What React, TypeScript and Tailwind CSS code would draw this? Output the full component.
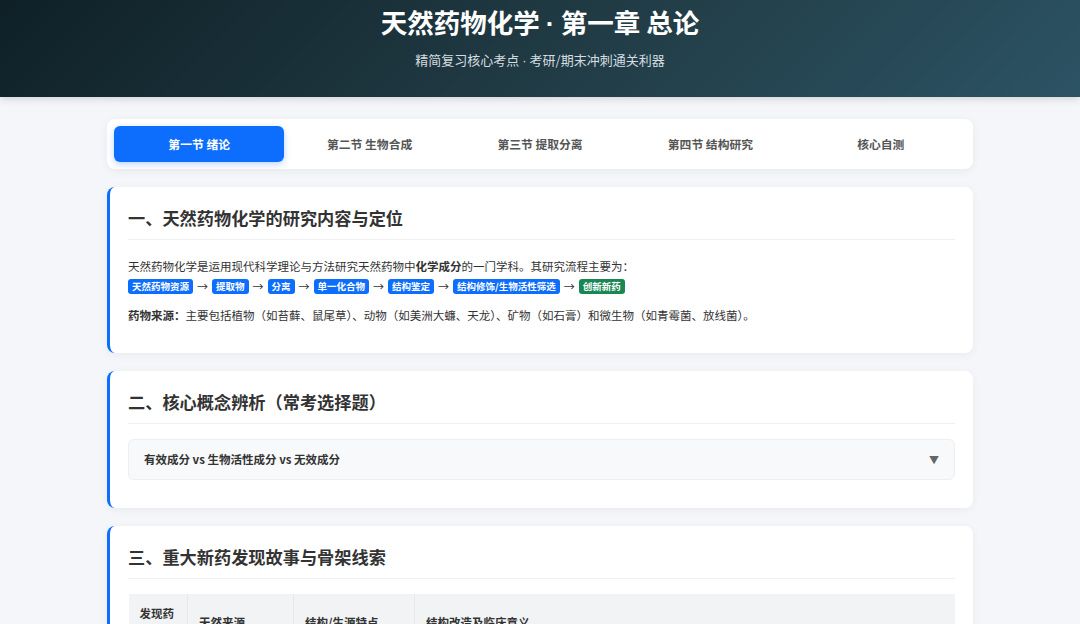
import React, { useState } from "react";

const TABS = ["第一节 绪论", "第二节 生物合成", "第三节 提取分离", "第四节 结构研究", "核心自测"];

const FLOW: { label: string; green?: boolean }[] = [
  { label: "天然药物资源" },
  { label: "提取物" },
  { label: "分离" },
  { label: "单一化合物" },
  { label: "结构鉴定" },
  { label: "结构修饰/生物活性筛选" },
  { label: "创新新药", green: true },
];

// Latin middle dot: the CJK one is full-width and spreads the title out.
const Dot = () => <span className="font-['Liberation_Sans']">·</span>;

function Card({ title, children }: { title: string; children: React.ReactNode }) {
  return (
    <section className="rounded-lg border-l-[3px] border-[#0d6efd] bg-white px-[18px] pt-[20px] pb-[28px] shadow-[0_2px_10px_rgba(0,0,0,0.05)]">
      <h2 className="m-0 border-b border-[#eef0f2] pb-[10px] text-[17.2px] font-bold leading-[22px] text-[#333]">
        {title}
      </h2>
      {children}
    </section>
  );
}

export default function App() {
  const [tab, setTab] = useState(0);
  const [open, setOpen] = useState(false);

  return (
    <div
      className="min-h-screen bg-[#f4f6f9] text-[#333]"
      style={{ fontFamily: '"Noto Sans CJK SC", "Noto Sans", sans-serif' }}
    >
      <header className="flex h-[97px] flex-col items-center bg-[linear-gradient(135deg,#0f2027,#203a43,#2c5364)] pt-[4px] text-white shadow-[0_2px_8px_rgba(0,0,0,0.15)]">
        <h1 className="m-0 text-[26.5px] font-bold leading-[36px]">
          天然药物化学 <Dot /> 第一章 总论
        </h1>
        <p className="m-0 mt-[8px] text-[13px] leading-[20px] text-[#d5dde0]">
          精简复习核心考点 <Dot /> 考研/期末冲刺通关利器
        </p>
      </header>

      <main className="mx-[107px] flex flex-col gap-[18px] pt-[22px]">
        <nav className="flex rounded-lg bg-white p-[7px] shadow-[0_2px_10px_rgba(0,0,0,0.06)]">
          {TABS.map((t, i) => (
            <button
              key={t}
              type="button"
              onClick={() => setTab(i)}
              className={
                i === tab
                  ? "h-9 flex-1 rounded-md bg-[#0d6efd] text-[11.8px] font-bold text-white shadow-[0_2px_6px_rgba(13,110,253,0.3)]"
                  : "h-9 flex-1 rounded-md text-[11.8px] font-bold text-[#555]"
              }
            >
              {t}
            </button>
          ))}
        </nav>

        <Card title="一、天然药物化学的研究内容与定位">
          <p className="m-0 mt-[16px] text-[11.5px] leading-[20px] text-[#333]">
            天然药物化学是运用现代科学理论与方法研究天然药物中<b>化学成分</b>的一门学科。其研究流程主要为：
          </p>
          <div className="flex items-center text-[11px] leading-[20px]">
            {FLOW.map((f, i) => (
              <React.Fragment key={f.label}>
                {i > 0 && <span className="mx-[4px] text-[#333]">→</span>}
                <span
                  className={
                    f.green
                      ? "rounded-[3px] bg-[#198754] px-[4px] text-[9.5px] font-bold leading-[15px] text-white"
                      : "rounded-[3px] bg-[#0d6efd] px-[4px] text-[9.5px] font-bold leading-[15px] text-white"
                  }
                >
                  {f.label}
                </span>
              </React.Fragment>
            ))}
          </div>
          <p className="m-0 mt-[9px] text-[11.5px] leading-[20px]">
            <b>药物来源：</b>主要包括植物（如苔藓、鼠尾草）、动物（如美洲大蠊、天龙）、矿物（如石膏）和微生物（如青霉菌、放线菌）。
          </p>
        </Card>

        <Card title="二、核心概念辨析（常考选择题）">
          <button
            type="button"
            onClick={() => setOpen((o) => !o)}
            className="mt-[15px] flex h-[41px] w-full items-center justify-between rounded-md border border-[#eceef0] bg-[#f8f9fa] px-[15px] text-left text-[11.5px] font-bold text-[#333]"
          >
            有效成分 vs 生物活性成分 vs 无效成分
            <span className="text-[10px] text-[#666]">▼</span>
          </button>
        </Card>

        <Card title="三、重大新药发现故事与骨架线索">
          <table className="mt-[15px] w-full table-fixed border-collapse text-left text-[11.5px]">
            <thead>
              <tr className="bg-[#f1f3f5] font-bold text-[#333]">
                <th className="w-[59px] border-r border-[#e6e8eb] px-[11px] py-[10px] align-middle leading-[18px]">发现药物</th>
                <th className="w-[106px] border-r border-[#e6e8eb] px-[11px] py-[10px] leading-[18px]">天然来源</th>
                <th className="w-[121px] border-r border-[#e6e8eb] px-[11px] py-[10px] leading-[18px]">结构/生源特点</th>
                <th className="border-[#e6e8eb] px-[11px] py-[10px] leading-[18px]">结构改造及临床意义</th>
              </tr>
            </thead>
            <tbody>
              <tr>
                <td className="border border-[#e6e8eb] px-[11px] py-[10px]">青蒿素</td>
                <td className="border border-[#e6e8eb] px-[11px] py-[10px]">黄花蒿</td>
                <td className="border border-[#e6e8eb] px-[11px] py-[10px]">倍半萜内酯</td>
                <td className="border border-[#e6e8eb] px-[11px] py-[10px]">蒿甲醚、青蒿琥酯</td>
              </tr>
            </tbody>
          </table>
        </Card>
      </main>
    </div>
  );
}
